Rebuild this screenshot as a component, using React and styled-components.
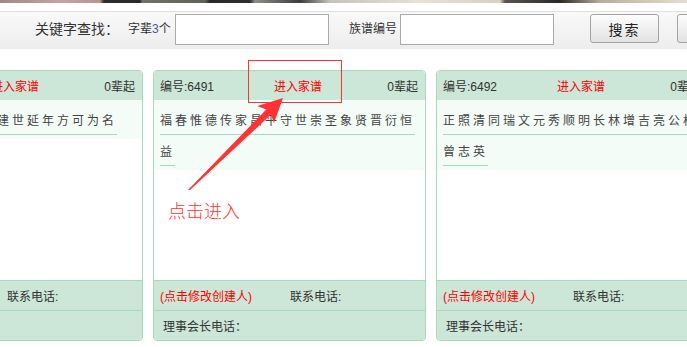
import React from "react";
import styled, { createGlobalStyle } from "styled-components";

const Global = createGlobalStyle`
  html, body {
    margin: 0;
    padding: 0;
    background: #fff;
    width: 687px;
    height: 347px;
    overflow: hidden;
  }
  body {
    font-family: "Liberation Sans", "Noto Sans CJK SC", sans-serif;
    color: #333;
  }
`;

const Page = styled.div`
  position: relative;
  width: 687px;
  height: 347px;
  overflow: hidden;
`;

const PhotoStrip = styled.div`
  height: 3px;
  background: linear-gradient(
    to right,
    #9a8a86 0, #c7a3a1 60px, #b59592 100px, #2c2b29 104px, #2a2a28 140px,
    #707369 142px, #5d6259 205px, #27292a 210px, #2d3030 250px, #8d8f88 255px,
    #3b3d3c 300px, #c6c3bb 330px, #e7e2d6 420px, #d8d0bf 500px, #5a5550 505px,
    #2a2826 560px, #b8ad97 600px, #e5dfd1 687px
  );
`;

const Toolbar = styled.div`
  margin-top: 8px;
  height: 35px;
  border-top: 1px solid #dedede;
  background: linear-gradient(#f9f9f9, #ededed);
  display: flex;
  align-items: flex-start;
  padding: 2px 0 0 35px;
  white-space: nowrap;
`;

const Label = styled.span`
  flex: 0 0 ${(p) => p.$w}px;
  font-size: ${(p) => p.$size || 12}px;
  line-height: 31px;
  color: #333;
`;

const Num = styled.span`
  color: #4a5a8a;
`;

const Field = styled.input`
  box-sizing: border-box;
  width: 154px;
  height: 31px;
  margin: 0;
  border: 1px solid #aaa;
  background: #fff;
  margin-right: ${(p) => p.$after || 0}px;
`;

const Button = styled.button`
  box-sizing: border-box;
  flex: 0 0 69px;
  height: 29px;
  margin: 0 18px 0 0;
  border: 1px solid #a3a3a3;
  border-radius: 3px;
  background: linear-gradient(#fdfdfd, #e2e2e2);
  font-family: "Noto Sans CJK SC", sans-serif;
  font-size: 14px;
  color: #222;
  letter-spacing: 2px;
  padding: 0;
`;

const Cards = styled.div`
  display: flex;
  gap: 10px;
  margin-top: 21px;
  margin-left: -130px;
`;

const Card = styled.div`
  box-sizing: border-box;
  flex: 0 0 273px;
  height: 271px;
  border: 1px solid #a9d8bf;
  border-radius: 4px;
  overflow: hidden;
  display: flex;
  flex-direction: column;
  background: #fff;
`;

const Head = styled.div`
  height: 29px;
  background: #cce6d8;
  display: flex;
  align-items: center;
  padding: 0 7px 0 6px;
  font-size: 12px;
  white-space: nowrap;
`;

const Code = styled.span`
  flex: 0 0 114px;
  color: #333;
`;

const Enter = styled.span`
  color: #f00;
`;

const Start = styled.span`
  margin-left: auto;
  color: #333;
`;

const Names = styled.div`
  background: #f4fcf8;
  padding: 6px 6px 2px;
  font-size: 12px;
  line-height: 31px;
  letter-spacing: 3px;
  color: #444;
`;

const Underlined = styled.span`
  padding-bottom: 6px;
  border-bottom: 1px solid #a9d8bf;
`;

const Blank = styled.div`
  flex: 1;
`;

const Foot = styled.div`
  height: 29px;
  border-top: 1px solid #a9d8bf;
  background: #cce6d8;
  display: flex;
  align-items: center;
  padding-left: ${(p) => p.$pad}px;
  font-size: 12px;
  white-space: nowrap;
`;

const Creator = styled.span`
  flex: 0 0 130px;
  color: #f00;
`;

const Overlay = styled.svg`
  position: absolute;
  left: 0;
  top: 0;
  pointer-events: none;
`;

const Callout = styled.span`
  position: absolute;
  left: 168px;
  top: 200px;
  font-family: "Noto Sans CJK SC", sans-serif;
  font-weight: 300;
  font-size: 18px;
  line-height: 20px;
  color: #ff3535;
`;

const cards = [
  { id: "6490", names: "承宗启绍继先光祖建世延年方可为名" },
  { id: "6491", names: "福春惟德传家昌平守世崇圣象贤晋衍恒益" },
  { id: "6492", names: "正照清同瑞文元秀顺明长林增吉亮公松曾志英" },
];

export default function App() {
  return (
    <Page>
      <Global />
      <PhotoStrip />
      <Toolbar>
        <Label $w={93} $size={14}>关键字查找：</Label>
        <Label $w={47}>字辈<Num>3</Num>个</Label>
        <Field $after={20} />
        <Label $w={51}>族谱编号</Label>
        <Field $after={36} />
        <Button>搜索</Button>
        <Button />
      </Toolbar>
      <Cards>
        {cards.map((c) => (
          <Card key={c.id}>
            <Head>
              <Code>编号:{c.id}</Code>
              <Enter>进入家谱</Enter>
              <Start>0辈起</Start>
            </Head>
            <Names>
              <Underlined>{c.names}</Underlined>
            </Names>
            <Blank />
            <Foot $pad={6}>
              <Creator>(点击修改创建人)</Creator>
              <span>联系电话:</span>
            </Foot>
            <Foot $pad={9}>理事会长电话：</Foot>
          </Card>
        ))}
      </Cards>
      <Overlay width="687" height="347" viewBox="0 0 687 347">
        <rect x="248.5" y="60.5" width="93" height="42" fill="none" stroke="#f33" strokeWidth="1" />
        <polygon
          points="188,190 266.2,109.6 257.3,106.1 283,98 274,123 271,114.6 190,190"
          fill="#f33"
        />
      </Overlay>
      <Callout>点击进入</Callout>
    </Page>
  );
}
